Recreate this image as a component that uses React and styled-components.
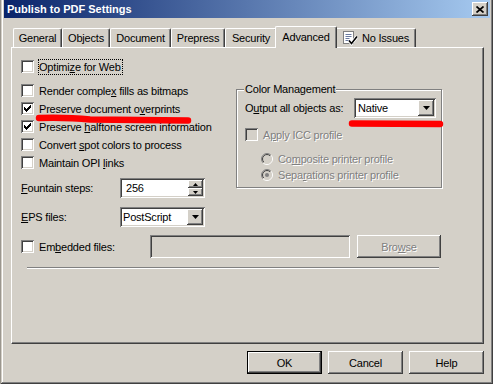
import React from 'react';
import styled, { createGlobalStyle, css } from 'styled-components';

const tabs = [
	{ label: 'General', width: 49 },
	{ label: 'Objects', width: 48 },
	{ label: 'Document', width: 61 },
	{ label: 'Prepress', width: 54 },
	{ label: 'Security', width: 52 },
	{ label: 'Advanced', width: 62, active: true },
	{ label: 'No Issues', width: 81, icon: true },
];

const CheckMark = () => (
	<svg width='7' height='7' viewBox='0 0 7 7' shapeRendering='crispEdges'>
		<path
			d='M0 2h1v3H0zM1 3h1v3H1zM2 4h1v3H2zM3 3h1v3H3zM4 2h1v3H4zM5 1h1v3H5zM6 0h1v3H6z'
			fill='#000'
		/>
	</svg>
);

const Check = ({ checked, disabled }) => (
	<CheckBox $disabled={disabled}>{checked && <CheckMark />}</CheckBox>
);

const Radio = ({ checked }) => (
	<RadioIcon width='12' height='12' viewBox='0 0 12 12'>
		<defs>
			<linearGradient id='radioOuter' x1='0' y1='0' x2='1' y2='1'>
				<stop offset='0.5' stopColor='#808080' />
				<stop offset='0.5' stopColor='#ffffff' />
			</linearGradient>
			<linearGradient id='radioInner' x1='0' y1='0' x2='1' y2='1'>
				<stop offset='0.5' stopColor='#404040' />
				<stop offset='0.5' stopColor='#d4d0c8' />
			</linearGradient>
		</defs>
		<circle cx='6' cy='6' r='5.5' fill='none' stroke='url(#radioOuter)' />
		<circle cx='6' cy='6' r='4.5' fill='#d4d0c8' stroke='url(#radioInner)' />
		{checked && <circle cx='6' cy='6' r='2' fill='#808080' />}
	</RadioIcon>
);

const DropArrow = () => (
	<svg width='7' height='4' viewBox='0 0 7 4'>
		<path d='M0 0h7L3.5 4z' fill='#000' />
	</svg>
);

const SpinArrow = ({ down }) => (
	<svg width='5' height='3' viewBox='0 0 5 3'>
		<path d={down ? 'M0 0h5L2.5 3z' : 'M0 3h5L2.5 0z'} fill='#000' />
	</svg>
);

const StatusIcon = () => (
	<svg width='16' height='16' viewBox='0 0 16 16'>
		<rect x='1.5' y='1.5' width='10' height='12' fill='#fff' stroke='#808080' />
		<path d='M3.5 4.5h6M3.5 6.5h6M3.5 8.5h4M3.5 10.5h3' stroke='#6a7aa0' />
		<path d='M7 10.5l2.5 3L15 6.5' fill='none' stroke='#fff' strokeWidth='3.2' />
		<path d='M7 10.5l2.5 3L15 6.5' fill='none' stroke='#000' strokeWidth='1.6' />
	</svg>
);

const App = () => {
	return (
		<>
			<GlobalStyle />
			<Screen>
				<Window>
					<TitleBar>
						<TitleText>Publish to PDF Settings</TitleText>
						<CloseButton>
							<svg width='8' height='7' viewBox='0 0 8 7'>
								<path d='M0.5 0.5l7 6M7.5 0.5l-7 6' stroke='#000' strokeWidth='1.7' />
							</svg>
						</CloseButton>
					</TitleBar>
					<Body>
						<TabStrip>
							{tabs.map((tab) => (
								<Tab key={tab.label} $width={tab.width} $active={tab.active}>
									{tab.icon && <StatusIcon />}
									{tab.label}
								</Tab>
							))}
						</TabStrip>
						<Panel>
							<Top>
								<LeftColumn>
									<CheckRow $gap={7}>
										<Check />
										<Text $focus>
											Optimi<u>z</u>e for Web
										</Text>
									</CheckRow>
									<CheckRow>
										<Check />
										<Text>
											Render comple<u>x</u> fills as bitmaps
										</Text>
									</CheckRow>
									<CheckRow>
										<Check checked />
										<Text>
											Preserve document o<u>v</u>erprints
										</Text>
									</CheckRow>
									<CheckRow>
										<Check checked />
										<Text>
											Preserve <u>h</u>alftone screen information
										</Text>
									</CheckRow>
									<CheckRow>
										<Check />
										<Text>
											Convert <u>s</u>pot colors to process
										</Text>
									</CheckRow>
									<CheckRow>
										<Check />
										<Text>
											Maintain OPI <u>l</u>inks
										</Text>
									</CheckRow>
									<FieldRow $top={6}>
										<FieldLabel>
											<u>F</u>ountain steps:
										</FieldLabel>
										<Field $width={85}>
											<FieldValue $pad={4}>256</FieldValue>
											<SpinButtons>
												<SpinButton>
													<SpinArrow />
												</SpinButton>
												<SpinButton>
													<SpinArrow down />
												</SpinButton>
											</SpinButtons>
										</Field>
									</FieldRow>
									<FieldRow $top={8}>
										<FieldLabel>
											<u>E</u>PS files:
										</FieldLabel>
										<Field $width={85}>
											<FieldValue $pad={1}>PostScript</FieldValue>
											<DropButton>
												<DropArrow />
											</DropButton>
										</Field>
									</FieldRow>
								</LeftColumn>
								<GroupBox>
									<Legend>Color Management</Legend>
									<FieldRow>
										<GroupLabel>
											O<u>u</u>tput all objects as:
										</GroupLabel>
										<Field $width={82}>
											<FieldValue $pad={2}>Native</FieldValue>
											<DropButton>
												<DropArrow />
											</DropButton>
										</Field>
									</FieldRow>
									<CheckRow $top={8} $disabled>
										<Check disabled />
										<Text>
											A<u>p</u>ply ICC profile
										</Text>
									</CheckRow>
									<RadioList>
										<RadioRow>
											<Radio />
											<span>
												Co<u>m</u>posite printer profile
											</span>
										</RadioRow>
										<RadioRow>
											<Radio checked />
											<span>
												Sepa<u>r</u>ations printer profile
											</span>
										</RadioRow>
									</RadioList>
								</GroupBox>
							</Top>
							<EmbeddedRow>
								<EmbeddedCheck as='div'>
									<Check />
									<Text>
										Em<u>b</u>edded files:
									</Text>
								</EmbeddedCheck>
								<PathField />
								<Button $width={84} $disabled>
									Bro<u>w</u>se
								</Button>
							</EmbeddedRow>
							<Separator />
						</Panel>
						<ButtonRow>
							<Button $default>OK</Button>
							<Button>Cancel</Button>
							<Button>Help</Button>
						</ButtonRow>
					</Body>
				</Window>
				<Marks width='493' height='384' viewBox='0 0 493 384'>
					<path
						d='M39 118Q68 117.3 90 119.4L188 120.4'
						fill='none'
						stroke='#ff0000'
						strokeWidth='6.5'
						strokeLinecap='round'
					/>
					<path
						d='M352 123.5L440 124'
						fill='none'
						stroke='#ff0000'
						strokeWidth='6.5'
						strokeLinecap='round'
					/>
				</Marks>
			</Screen>
		</>
	);
};

const face = '#d4d0c8';

const raised = css`
	box-shadow: inset -1px -1px #404040, inset 1px 1px #ffffff,
		inset -2px -2px #808080, inset 2px 2px ${face};
`;

const sunken = css`
	box-shadow: inset 1px 1px #808080, inset -1px -1px #ffffff,
		inset 2px 2px #404040, inset -2px -2px ${face};
`;

const disabledText = css`
	color: #808080;
	text-shadow: 1px 1px 0 #ffffff;
`;

const GlobalStyle = createGlobalStyle`
	html, body {
		margin: 0;
		padding: 0;
	}

	body {
		background: ${face};
		font-family: "Liberation Sans", Arial, sans-serif;
		font-size: 11px;
		letter-spacing: -0.2px;
		color: #000;
	}

	u {
		text-underline-offset: 1px;
	}
`;

const Screen = styled.div`
	position: relative;
	width: 493px;
	height: 384px;
	overflow: hidden;
	border-left: 1px solid #9a968e;
	box-sizing: border-box;
`;

const Window = styled.div`
	box-sizing: border-box;
	width: 492px;
	height: 387px;
	margin-top: -3px;
	padding: 3px;
	background: ${face};
	box-shadow: inset -1px -1px #404040, inset 1px 1px ${face},
		inset -2px -2px #808080, inset 2px 2px #ffffff;
	display: flex;
	flex-direction: column;
`;

const TitleBar = styled.div`
	height: 18px;
	flex: none;
	display: flex;
	align-items: center;
	justify-content: space-between;
	padding: 0 2px 0 3px;
	background: linear-gradient(to right, #0a246a, #a6caf0);
`;

const TitleText = styled.span`
	color: #fff;
	font-weight: bold;
	font-size: 11px;
	letter-spacing: 0;
`;

const CloseButton = styled.div`
	box-sizing: border-box;
	width: 16px;
	height: 14px;
	display: flex;
	align-items: center;
	justify-content: center;
	padding-right: 1px;
	background: ${face};
	${raised}
`;

const Body = styled.div`
	display: flex;
	flex-direction: column;
	padding: 8px 6px 0 7px;
`;

const TabStrip = styled.div`
	display: flex;
	align-items: flex-end;
	height: 21px;
	padding-left: 2px;
	position: relative;
	z-index: 1;
`;

const Tab = styled.div`
	box-sizing: border-box;
	flex: none;
	width: ${({ $width }) => $width}px;
	height: ${({ $active }) => ($active ? 22 : 19)}px;
	margin: ${({ $active }) => ($active ? '0 -2px -1px' : '0')};
	position: relative;
	z-index: ${({ $active }) => ($active ? 2 : 1)};
	display: flex;
	align-items: center;
	justify-content: center;
	gap: 4px;
	padding-bottom: ${({ $active }) => ($active ? 2 : 0)}px;
	background: ${face};
	border-top: 1px solid #ffffff;
	border-left: 1px solid #ffffff;
	border-right: 1px solid #404040;
	border-radius: 2px 2px 0 0;
	box-shadow: inset -1px 0 #808080;
	white-space: nowrap;
`;

const Panel = styled.div`
	box-sizing: border-box;
	width: 473px;
	height: 297px;
	padding: 10px 0 0 9px;
	border-top: 1px solid #ffffff;
	border-left: 1px solid #ffffff;
	border-right: 1px solid #404040;
	border-bottom: 1px solid #404040;
	box-shadow: inset -1px -1px #808080;
`;

const Top = styled.div`
	display: grid;
	grid-template-columns: 215px 206px;
	align-items: start;
`;

const LeftColumn = styled.div`
	display: flex;
	flex-direction: column;
	gap: 1px;
`;

const CheckRow = styled.label`
	display: flex;
	align-items: center;
	gap: 4px;
	height: 17px;
	margin-top: ${({ $top }) => $top || 0}px;
	margin-bottom: ${({ $gap }) => ($gap ? $gap - 1 : 0)}px;
	white-space: nowrap;
	${({ $disabled }) => $disabled && disabledText}
`;

const EmbeddedCheck = styled(CheckRow)`
	width: 129px;
	flex: none;
`;

const CheckBox = styled.span`
	box-sizing: border-box;
	flex: none;
	width: 13px;
	height: 13px;
	display: flex;
	align-items: center;
	justify-content: center;
	background: ${({ $disabled }) => ($disabled ? face : '#ffffff')};
	${sunken}
`;

const Text = styled.span`
	border: 1px dotted ${({ $focus }) => ($focus ? '#000' : 'transparent')};
	padding-right: 1px;
	line-height: 14px;
`;

const FieldRow = styled.div`
	display: flex;
	align-items: center;
	height: 20px;
	margin-top: ${({ $top }) => $top || 0}px;
	white-space: nowrap;
`;

const FieldLabel = styled.span`
	width: 99px;
	flex: none;
`;

const GroupLabel = styled.span`
	width: 109px;
	flex: none;
`;

const Field = styled.div`
	box-sizing: border-box;
	width: ${({ $width }) => $width}px;
	height: 20px;
	padding: 2px;
	display: flex;
	align-items: stretch;
	background: #ffffff;
	${sunken}
`;

const FieldValue = styled.span`
	flex: 1;
	display: flex;
	align-items: center;
	padding-left: ${({ $pad }) => $pad}px;
`;

const DropButton = styled.div`
	box-sizing: border-box;
	width: 16px;
	display: flex;
	align-items: center;
	justify-content: center;
	background: ${face};
	${raised}
`;

const SpinButtons = styled.div`
	display: flex;
	flex-direction: column;
	width: 15px;
`;

const SpinButton = styled.div`
	box-sizing: border-box;
	flex: 1;
	display: flex;
	align-items: center;
	justify-content: center;
	background: ${face};
	${raised}
`;

const GroupBox = styled.div`
	position: relative;
	box-sizing: border-box;
	height: 99px;
	margin-top: 31px;
	padding: 8px 0 0 8px;
	border: 1px solid #808080;
	box-shadow: inset 1px 1px #ffffff, 1px 1px #ffffff;
`;

const Legend = styled.span`
	position: absolute;
	top: -7px;
	left: 7px;
	padding: 0 1px;
	line-height: 13px;
	background: ${face};
`;

const RadioList = styled.div`
	display: flex;
	flex-direction: column;
	margin: 8px 0 0 16px;
	${disabledText}
`;

const RadioRow = styled.div`
	display: flex;
	align-items: center;
	gap: 5px;
	height: 16px;
	white-space: nowrap;
`;

const RadioIcon = styled.svg`
	flex: none;
`;

const EmbeddedRow = styled.div`
	display: flex;
	align-items: center;
	height: 23px;
	margin-top: 8px;
`;

const PathField = styled.div`
	box-sizing: border-box;
	width: 200px;
	height: 23px;
	background: ${face};
	${sunken}
`;

const Button = styled.div`
	box-sizing: border-box;
	width: ${({ $width }) => $width || 75}px;
	height: 23px;
	display: flex;
	align-items: center;
	justify-content: center;
	margin-left: ${({ $disabled }) => ($disabled ? 7 : 0)}px;
	background: ${face};
	border: ${({ $default }) => ($default ? '1px solid #000' : 'none')};
	${raised}
	${({ $disabled }) => $disabled && disabledText}
`;

const Separator = styled.div`
	width: 412px;
	margin: 9px 0 0 6px;
	border-top: 1px solid #808080;
	border-bottom: 1px solid #ffffff;
`;

const ButtonRow = styled.div`
	display: flex;
	justify-content: flex-end;
	gap: 6px;
	margin-top: 7px;
	width: 473px;
`;

const Marks = styled.svg`
	position: absolute;
	top: 0;
	left: -1px;
	pointer-events: none;
`;

export default App;
